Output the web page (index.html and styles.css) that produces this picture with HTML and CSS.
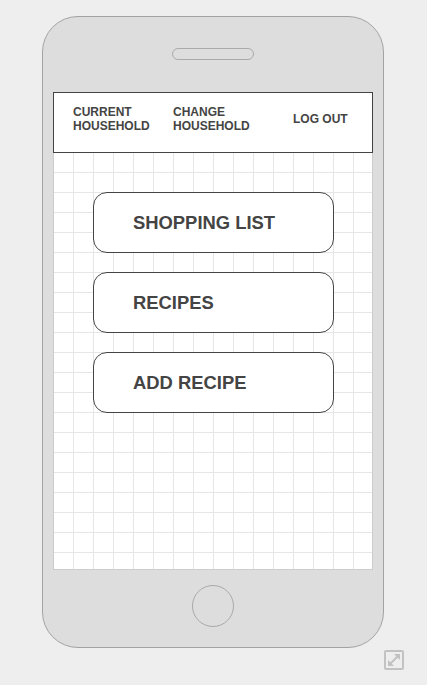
FILE: index.html
```html
<!DOCTYPE html>
<html>
<head>
<meta charset="utf-8">
<link rel="stylesheet" href="styles.css">
</head>
<body>
<div class="page">
  <div class="phone">
    <div class="speaker"></div>
    <div class="screen">
      <nav class="topbar">
        <span class="nav-item">CURRENT<br>HOUSEHOLD</span>
        <span class="nav-item">CHANGE<br>HOUSEHOLD</span>
        <span class="nav-item">LOG OUT</span>
      </nav>
      <div class="menu">
        <div class="menu-btn">SHOPPING LIST</div>
        <div class="menu-btn">RECIPES</div>
        <div class="menu-btn">ADD RECIPE</div>
      </div>
    </div>
    <div class="home"></div>
  </div>
  <div class="tools">
    <svg class="expand" width="20" height="20" viewBox="0 0 20 20">
      <rect x="1" y="1" width="18" height="18" rx="1" fill="none" stroke="#c2c2c2" stroke-width="2"/>
      <line x1="6.5" y1="13.5" x2="13.5" y2="6.5" stroke="#c2c2c2" stroke-width="2"/>
      <polygon points="16,4 16,10 10,4" fill="#c2c2c2"/>
      <polygon points="4,16 4,10 10,16" fill="#c2c2c2"/>
    </svg>
  </div>
</div>
</body>
</html>
```
FILE: styles.css
```css
html, body {
  margin: 0;
  padding: 0;
  background: #eeeeee;
}
body {
  font-family: "Liberation Sans", Arial, sans-serif;
}
.page {
  width: 427px;
  height: 685px;
  padding: 16px 0 0 42px;
  box-sizing: border-box;
}
.phone {
  width: 342px;
  height: 632px;
  box-sizing: border-box;
  border: 1px solid #a3a3a3;
  border-radius: 36px;
  background: #dddddd;
  display: flex;
  flex-direction: column;
  align-items: center;
  padding-top: 31px;
}
.speaker {
  width: 82px;
  height: 12px;
  box-sizing: border-box;
  border: 1px solid #aaaaaa;
  border-radius: 6px;
}
.screen {
  margin-top: 32px;
  width: 320px;
  height: 478px;
  box-sizing: border-box;
  border: 1px solid #cccccc;
  border-top: none;
  background-color: #ffffff;
  background-image:
    linear-gradient(to right, #e6e6e6 1px, transparent 1px),
    linear-gradient(to bottom, #e6e6e6 1px, transparent 1px);
  background-size: 20px 20px;
  background-position: -1px 0;
  display: flex;
  flex-direction: column;
}
.topbar {
  height: 61px;
  box-sizing: border-box;
  margin: 0 -1px 0 -1px;
  border: 1px solid #444444;
  background: #ffffff;
  display: grid;
  grid-template-columns: 100px 120px auto;
  align-items: center;
  padding: 0 0 7px 19px;
}
.nav-item {
  font-size: 12px;
  line-height: 14px;
  font-weight: bold;
  color: #444444;
}
.menu {
  display: flex;
  flex-direction: column;
  align-items: flex-start;
  gap: 19px;
  padding: 39px 0 0 39px;
}
.menu-btn {
  width: 241px;
  height: 61px;
  box-sizing: border-box;
  border: 1px solid #444444;
  border-radius: 14px;
  background: #ffffff;
  display: flex;
  align-items: center;
  padding-left: 39px;
  font-size: 18.4px;
  font-weight: bold;
  color: #444444;
}
.home {
  margin-top: 15px;
  width: 42px;
  height: 42px;
  box-sizing: border-box;
  border: 1px solid #aaaaaa;
  border-radius: 50%;
}
.tools {
  width: 362px;
  display: flex;
  justify-content: flex-end;
  margin-top: 2px;
}
.expand {
  display: block;
}
```
